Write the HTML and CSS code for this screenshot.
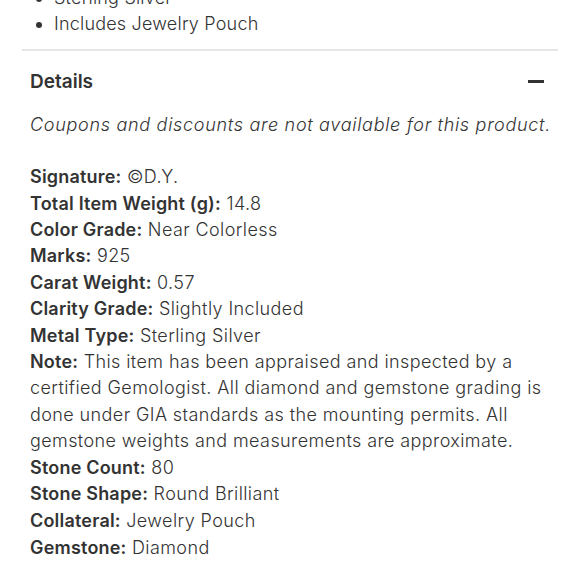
FILE: index.html
```html
<!DOCTYPE html>
<html>
<head>
<meta charset="utf-8">
<link rel="stylesheet" href="styles.css">
</head>
<body>
<div class="page">
  <ul class="features">
    <li>Sterling Silver</li>
    <li>Includes Jewelry Pouch</li>
  </ul>
  <section class="details">
    <div class="details-head">
      <h2 class="details-title">Details</h2>
      <span class="minus" aria-hidden="true"></span>
    </div>
    <div class="details-body">
      <p class="notice">Coupons and discounts are not available for this product.</p>
      <div class="specs">
        <div><b>Signature:</b> ©D.Y.</div>
        <div><b>Total Item Weight (g):</b> 14.8</div>
        <div><b>Color Grade:</b> Near Colorless</div>
        <div><b>Marks:</b> 925</div>
        <div><b>Carat Weight:</b> 0.57</div>
        <div><b>Clarity Grade:</b> Slightly Included</div>
        <div><b>Metal Type:</b> Sterling Silver</div>
        <div><b>Note:</b> This item has been appraised and inspected by a certified Gemologist. All diamond and gemstone grading is done under GIA standards as the mounting permits. All gemstone weights and measurements are approximate.</div>
        <div><b>Stone Count:</b> 80</div>
        <div><b>Stone Shape:</b> Round Brilliant</div>
        <div><b>Collateral:</b> Jewelry Pouch</div>
        <div><b>Gemstone:</b> Diamond</div>
      </div>
    </div>
  </section>
</div>
</body>
</html>
```
FILE: styles.css
```css
html, body {
  margin: 0;
  padding: 0;
  background: #fff;
}
body {
  font-family: Inter, "Noto Sans", sans-serif;
  font-size: 18px;
  line-height: 26.4px;
  color: #333;
}
.page {
  padding: 0 22px;
  overflow: hidden;
  height: 580px;
}
.features {
  margin: -15px 0 0 0;
  padding: 0 0 0 32px;
  list-style: disc;
  font-weight: 300;
  letter-spacing: 0.2px;
}
.details {
  border-top: 2px solid #e6e6e6;
  margin-top: 11px;
}
.details-head {
  display: flex;
  align-items: center;
  justify-content: space-between;
  padding: 17px 14px 0 8px;
  height: 28px;
}
.details-title {
  margin: 0;
  font-size: 19px;
  font-weight: 600;
  color: #333;
}
.minus {
  width: 16px;
  height: 3px;
  background: #333;
  display: block;
}
.details-body {
  padding: 0 0 0 8px;
}
.notice {
  margin: 16px 0 26px;
  font-style: italic;
  font-weight: 300;
  letter-spacing: 0.7px;
}
.specs {
  font-weight: 300;
  letter-spacing: 0.4px;
}
.specs div {
  padding-right: 8px;
}
.specs div:last-child {
  margin-top: 1px;
}
.specs b {
  font-weight: 600;
  letter-spacing: 0.2px;
}
```
